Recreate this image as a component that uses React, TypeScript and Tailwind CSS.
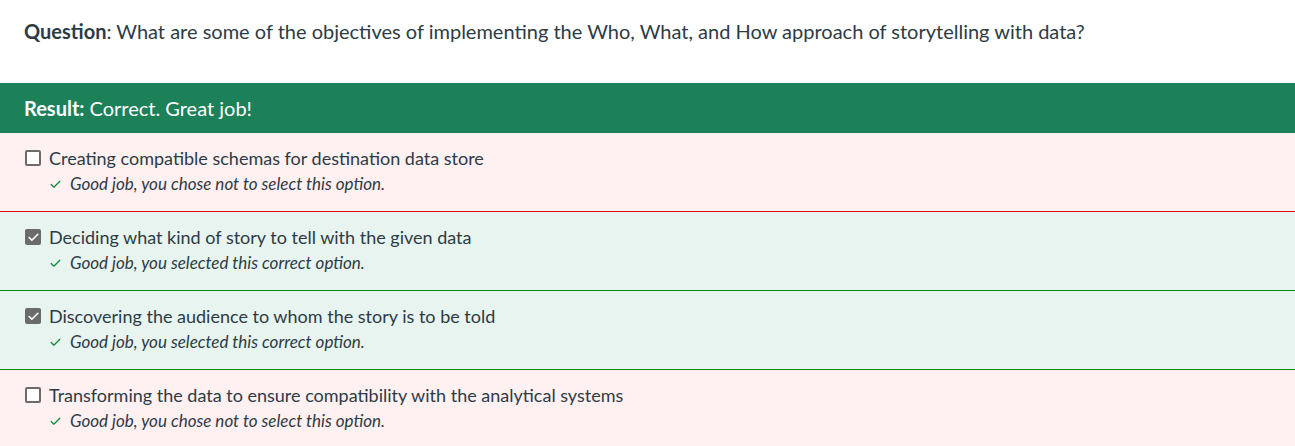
import { Check } from 'lucide-react';

const options = [
  { text: 'Creating compatible schemas for destination data store', checked: false },
  { text: 'Deciding what kind of story to tell with the given data', checked: true },
  { text: 'Discovering the audience to whom the story is to be told', checked: true },
  { text: 'Transforming the data to ensure compatibility with the analytical systems', checked: false }
];

function Box({ checked }: { checked: boolean }) {
  if (checked) {
    return (
      <div className="w-[16px] h-[16px] rounded-[2px] bg-[#6b6b6b] flex items-center justify-center shrink-0">
        <Check className="w-[13px] h-[13px] text-white" strokeWidth={3} />
      </div>
    );
  }
  return <div className="w-[16px] h-[16px] rounded-[2px] border-2 border-[#6b6b6b] bg-white shrink-0" />;
}

export default function App() {
  return (
    <div className="w-[1295px] h-[446px] overflow-hidden bg-white text-[#2d3b45]" style={{ fontFamily: 'Lato, "Noto Sans", sans-serif' }}>
      <div className="h-[83px] px-[24px] pt-[19px] text-[20px] leading-[24px]">
        <span className="font-bold">Question</span>: What are some of the objectives of implementing the Who, What, and How approach of storytelling with data?
      </div>
      <div className="h-[50px] bg-[#1c8059] text-white px-[24px] flex items-center text-[20px]">
        <span className="font-bold mr-[5px]">Result:</span>Correct. Great job!
      </div>
      {options.map((o, i) => (
        <div
          key={o.text}
          className={
            (o.checked ? 'bg-[#e7f4ef] ' : 'bg-[#fff0f2] ') +
            (i < options.length - 1 ? (o.checked ? 'border-b border-[#0b8a12] ' : 'border-b border-[#e00b0b] ') : '') +
            'h-[79px] px-[25px] pt-[15px]'
          }
        >
          <div className="flex items-center gap-[8px] text-[18px] leading-[20px]">
            <Box checked={o.checked} />
            <span>{o.text}</span>
          </div>
          <div className="flex items-center pl-[24px] mt-[6px] text-[17px] leading-[20px] italic">
            <Check className="w-[13px] h-[13px] text-[#0b8a3a] mr-[8px]" strokeWidth={2.25} />
            <span>{o.checked ? 'Good job, you selected this correct option.' : 'Good job, you chose not to select this option.'}</span>
          </div>
        </div>
      ))}
    </div>
  );
}
